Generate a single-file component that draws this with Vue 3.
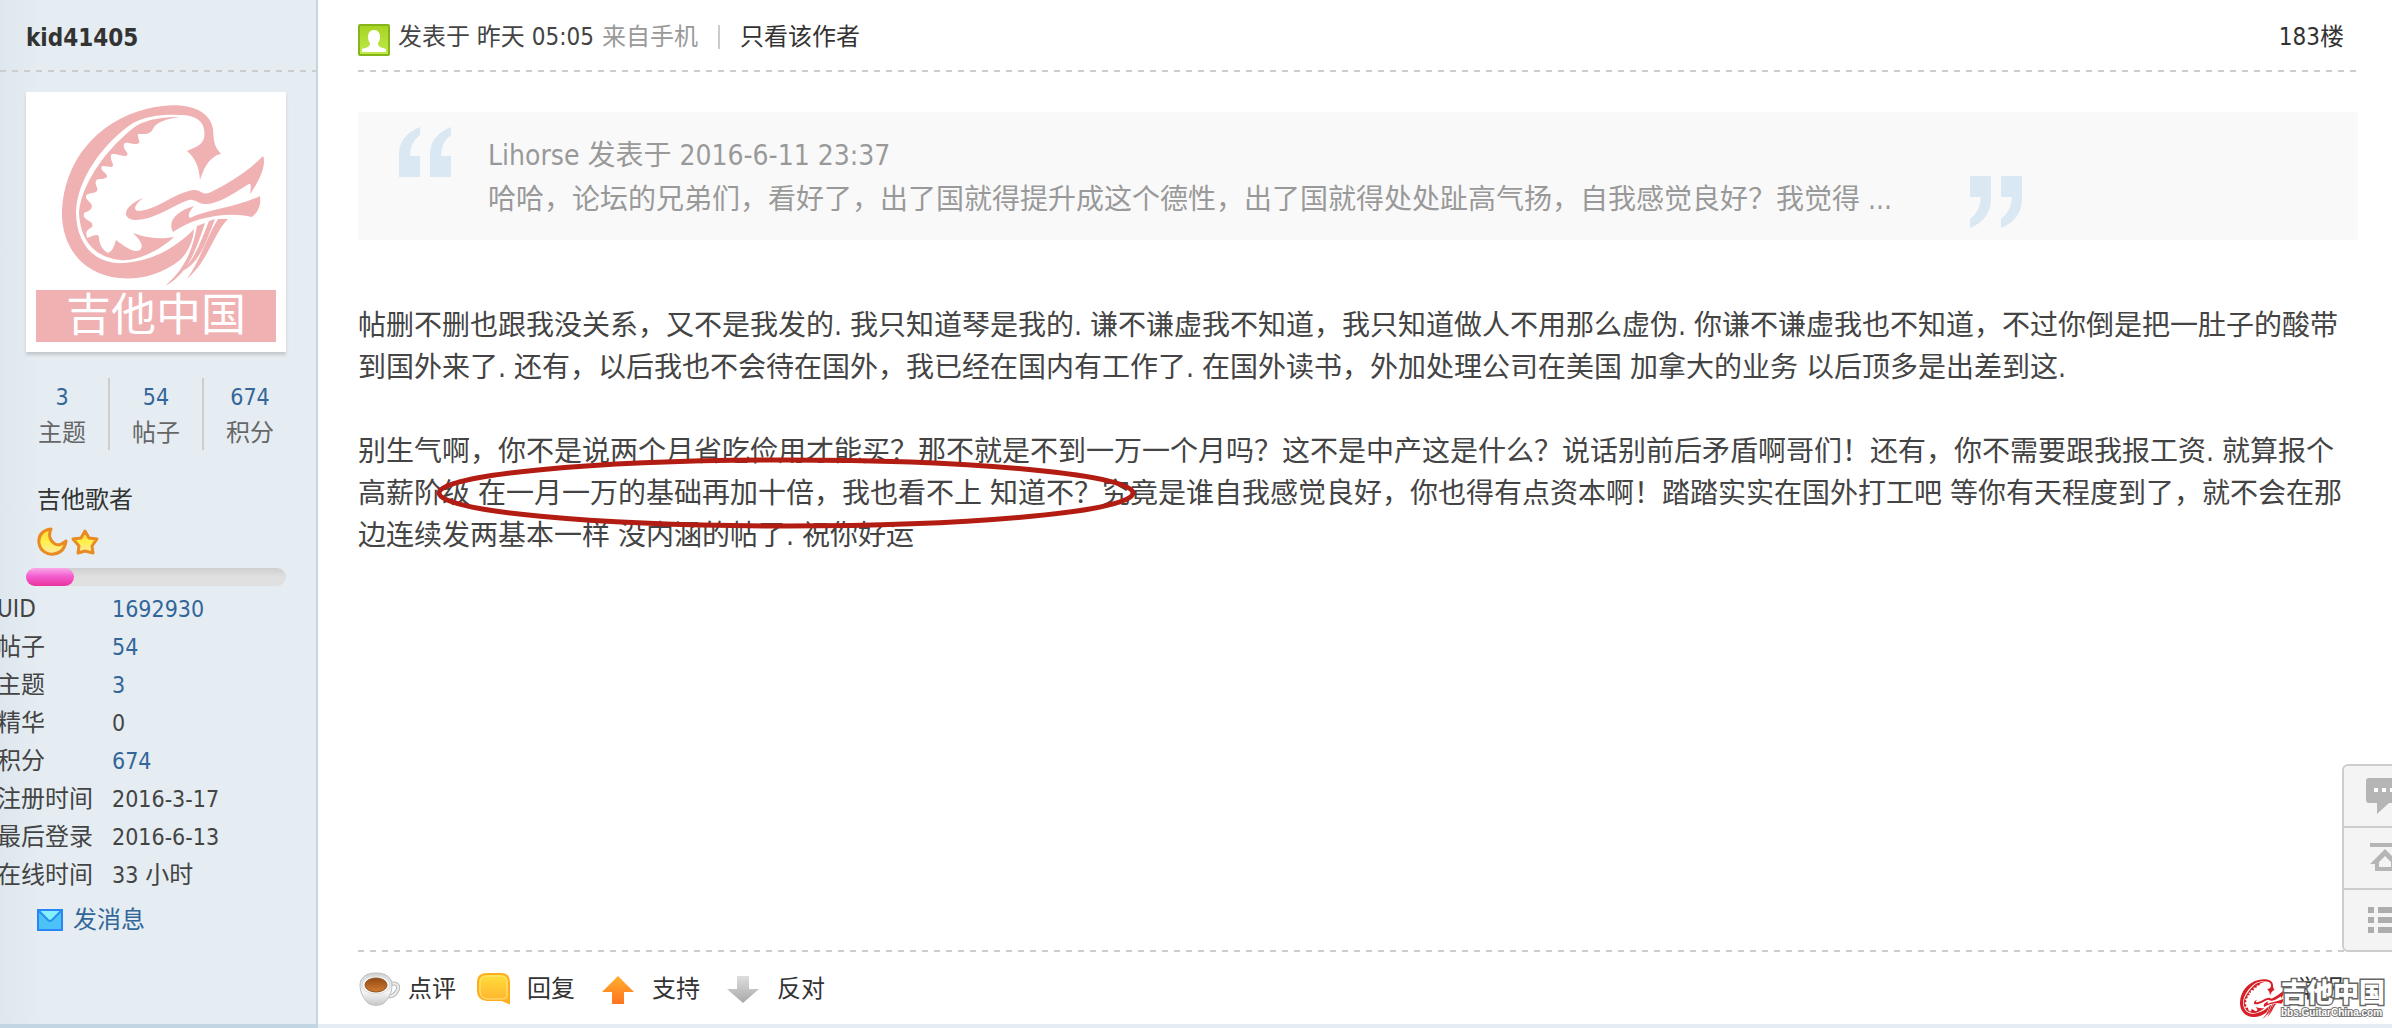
<template>
  <div class="post">
    <!-- 左侧用户信息 -->
    <aside class="author">
      <div class="author-name">
        <a href="#">kid41405</a>
      </div>
      <div class="dash"></div>
      <div class="avatar">
        <svg class="avatar-logo" viewBox="0 0 240 188">
          <use href="#guitar-logo" fill="#f0b1b3" stroke="#f0b1b3" />
        </svg>
        <div class="avatar-text">吉他中国</div>
      </div>
      <ul class="stats">
        <li v-for="item in stats" :key="item.name">
          <a href="#">{{ item.value }}</a>
          <span>{{ item.name }}</span>
        </li>
      </ul>
      <div class="rank">
        <a href="#" class="rank-name">吉他歌者</a>
        <div class="rank-icons">
          <svg width="32" height="32" viewBox="0 0 32 32">
            <path d="M14 3C6 4 1 9 2 17c1 8 8 12 15 11 7-1 11-6 12-13-4 3-7 5-11 3-5-3-7-9-4-15z" fill="url(#gold)" stroke="#e98a22" stroke-width="3" stroke-linejoin="round" />
          </svg>
          <svg width="30" height="32" viewBox="0 0 30 32">
            <path d="M16 5l4 7 8 1-5 7 1 7-8-2-7 2 1-7-6-7 8-1z" fill="url(#gold)" stroke="#e98a22" stroke-width="3" stroke-linejoin="round" />
          </svg>
        </div>
      </div>
      <div class="progress">
        <div class="progress-bar" :style="{ width: percent + '%' }"></div>
      </div>
      <dl class="info">
        <template v-for="row in info" :key="row.label">
          <dt>{{ row.label }}</dt>
          <dd>
            <a v-if="row.link" href="#">{{ row.value }}</a>
            <template v-else>{{ row.value }}</template>
            <span v-if="row.unit">&nbsp;{{ row.unit }}</span>
          </dd>
        </template>
      </dl>
      <a href="#" class="message">
        <svg width="26" height="22" viewBox="0 0 26 22">
          <rect x="1" y="1" width="24" height="20" fill="#4cc3f7" stroke="#2a86f8" stroke-width="2" />
          <path d="M3 2h20l-8 9q-2 2-4 0z" fill="#84f1ff" />
          <path d="M2 2l9 9q2 2 4 0l9-9" fill="none" stroke="#2a90ee" stroke-width="2" />
        </svg>
        发消息
      </a>
    </aside>

    <!-- 右侧帖子内容 -->
    <main class="content">
      <header class="post-header">
        <svg width="32" height="32" viewBox="0 0 32 32">
          <rect x="1" y="1" width="30" height="30" rx="1" fill="url(#green)" stroke="#84b51a" stroke-width="2" />
          <path d="M16 6c4 0 6 3 6 7 0 3-1 5-2 6 0 3 1 4 8 6v3H4v-3c7-2 8-3 8-6-1-1-2-3-2-6 0-4 2-7 6-7z" fill="#fff" />
        </svg>
        <span class="time">发表于 昨天 05:05</span>
        <span class="from">来自手机</span>
        <span class="pipe"></span>
        <a href="#">只看该作者</a>
        <a href="#" class="floor">183楼</a>
      </header>
      <div class="dash"></div>

      <blockquote class="quote">
        <svg class="quote-open" width="52" height="50" viewBox="0 0 52 50">
          <path d="M0 50V26Q1 8 21 0V8Q11 15 11 29H21V50zM31 50V26Q32 8 52 0V8Q42 15 42 29H52V50z" fill="#d9e8f3" />
        </svg>
        <div class="quote-text">
          <a href="#">Lihorse 发表于 2016-6-11 23:37</a>
          <p>哈哈，论坛的兄弟们，看好了，出了国就得提升成这个德性，出了国就得处处趾高气扬，自我感觉良好？我觉得 ...</p>
        </div>
        <svg class="quote-close" width="52" height="52" viewBox="0 0 52 52">
          <path d="M0 0H21V24Q20 44 0 52V43Q10 36 11 21H0zM31 0H52V24Q51 44 31 52V43Q41 36 42 21H31z" fill="#d9e8f3" />
        </svg>
      </blockquote>

      <div class="message-body">
        <p>帖删不删也跟我没关系，又不是我发的. 我只知道琴是我的. 谦不谦虚我不知道，我只知道做人不用那么虚伪. 你谦不谦虚我也不知道，不过你倒是把一肚子的酸带到国外来了. 还有，以后我也不会待在国外，我已经在国内有工作了. 在国外读书，外加处理公司在美国 加拿大的业务 以后顶多是出差到这.</p>
        <p>别生气啊，你不是说两个月省吃俭用才能买？那不就是不到一万一个月吗？这不是中产这是什么？说话别前后矛盾啊哥们！还有，你不需要跟我报工资. 就算报个高薪阶级 在一月一万的基础再加十倍，我也看不上 知道不？究竟是谁自我感觉良好，你也得有点资本啊！踏踏实实在国外打工吧 等你有天程度到了，就不会在那边连续发两基本一样 没内涵的帖了. 祝你好运</p>
        <svg class="mark" width="702" height="72" viewBox="0 0 702 72">
          <ellipse cx="350" cy="36" rx="347" ry="33" fill="none" stroke="#b31c12" stroke-width="5" />
        </svg>
      </div>

      <div class="dash"></div>
      <footer class="actions">
        <a href="#">
          <svg width="50" height="34" viewBox="0 0 50 34">
            <path d="M32 12c7-2 10 2 7 7-2 4-6 6-11 5" fill="none" stroke="#b9b9b9" stroke-width="4" />
            <path d="M32 12c7-2 10 2 7 7-2 4-6 6-11 5" fill="none" stroke="#ececec" stroke-width="2" />
            <path d="M2 13C2 5 9 1 18 1s16 4 16 12c0 9-4 14-8 18-4 3-12 3-16 0C6 27 2 21 2 13z" fill="url(#cup)" stroke="#bcbcbc" />
            <ellipse cx="18" cy="13" rx="14" ry="9" fill="#f5f5f5" stroke="#ddd" />
            <ellipse cx="18" cy="13" rx="11" ry="7" fill="url(#coffee)" stroke="#8c5222" />
          </svg>
          点评
        </a>
        <a href="#">
          <svg width="50" height="34" viewBox="0 0 50 34">
            <path d="M10 2h14q8 0 8 8v21l-7-3H10q-9-1-9-9v-9q0-8 9-8z" fill="url(#bubble)" stroke="#ffae1b" stroke-width="2" />
            <path d="M10 4h14q6 0 6 6v13q0 4-6 4H10q-7-1-7-7v-9q0-7 7-7z" fill="none" stroke="#ffe680" />
          </svg>
          回复
        </a>
        <a href="#">
          <svg width="56" height="34" viewBox="0 0 56 34">
            <path d="M22 4l16 16H28v12H16V20H6z" fill="url(#up)" />
          </svg>
          支持
        </a>
        <a href="#">
          <svg width="56" height="34" viewBox="0 0 56 34">
            <path d="M22 31l16-14H28V4H16v13H6z" fill="url(#down)" />
          </svg>
          反对
        </a>
        <a href="#" class="report">举报</a>
      </footer>
    </main>

    <!-- 右侧悬浮按钮 -->
    <nav class="side-tools">
      <button aria-label="回复">
        <svg width="50" height="40" viewBox="0 0 50 40">
          <path d="M3 2h40q3 0 3 3v19q0 3-3 3H23L11 38V27H3q-3 0-3-3V5q0-3 3-3z" fill="#b5b5b5" />
          <path d="M8 12h4v4H8zM16 12h4v4h-4zM24 12h4v4h-4z" fill="#fff" />
        </svg>
      </button>
      <button aria-label="顶部">
        <svg width="50" height="40" viewBox="0 0 50 40">
          <path d="M4 5h30v4H4zM19 11L4 26h5v7h20v-7h5zM19 18l6 6v5H13v-5z" fill="#b5b5b5" fill-rule="evenodd" />
        </svg>
      </button>
      <button aria-label="列表">
        <svg width="50" height="40" viewBox="0 0 50 40">
          <path d="M2 7h6v6H2zM12 7h24v6H12zM2 17h6v6H2zM12 17h24v6H12zM2 27h6v6H2zM12 27h24v6H12z" fill="#adadad" />
        </svg>
      </button>
    </nav>

    <!-- 水印 -->
    <div class="watermark">
      <svg width="44" height="41" viewBox="26 4 202 184">
        <use href="#guitar-logo" fill="#d61f26" stroke="#d61f26" />
      </svg>
      <div class="watermark-text">
        <strong>吉他中国</strong>
        <span>bbs.GuitarChina.com</span>
      </div>
    </div>

    <svg class="defs" width="0" height="0">
      <defs>
        <g id="guitar-logo">
          <!-- 外圈琴身 -->
          <path stroke="none" d="M168 36C171 20 160 13 144 13C128 12 110 14 97 21C66 42 41 78 40 110C40 145 62 163 88 161C124 158 145 140 158 127C157 141 151 151 144 158C124 174 101 178 83 176C45 172 25 143 26 109C28 60 60 20 110 7C150-3 174 8 177 27C178 38 177 43 185 52L181 53C175 57 170 60 164 78C163 64 159 56 151 49C160 45 166 43 168 36z" />
          <path stroke="none" d="M144 15C130 17 120 20 117 27C114 33 108 32 102 32C101 37 107 41 100 42C96 42 90 39 88 42C86 48 95 51 90 54C84 54 77 50 75 53C74 60 79 62 76 65L66 64C63 69 72 71 71 75C66 79 62 75 60 79C58 84 64 86 60 90C54 92 50 91 50 95C50 99 60 102 54 108C50 111 47 109 48 115C52 120 58 119 56 125C52 128 49 128 51 136C57 134 62 131 63 135C63 143 67 148 72 151C77 149 78 144 80 138C88 144 98 152 104 148C109 143 102 136 97 131C108 135 121 138 138 135C123 149 100 160 84 158C58 155 44 138 43 110C46 80 72 45 100 24C112 17 126 15 144 15z" />
          <!-- 琴颈 -->
          <path stroke="none" d="M107 96C99 102 96 109 103 109C123 107 134 93 157 88C164 87 166 93 173 91C192 82 213 69 227 54C231 62 223 80 214 92C215 84 216 80 211 83C198 91 190 97 177 101C163 105 160 96 153 98C133 105 121 117 99 118C85 117 87 104 107 96z" />
          <path stroke="none" d="M158 104C154 109 151 113 154 116C172 107 199 106 224 94C225 103 223 109 216 115C189 109 157 116 137 130C131 119 141 109 158 104z" />
          <path stroke="none" d="M161 124L169 121C160 148 152 172 129 184C150 166 157 146 161 124zM173 119L179 117C170 140 163 162 146 169C160 156 166 136 173 119zM182 117L192 117C177 132 173 158 151 177C165 157 170 136 182 117z" />
        </g>
        <linearGradient id="gold" x1="0" y1="0" x2="0" y2="1">
          <stop offset="0" stop-color="#ffd83c" />
          <stop offset="0.5" stop-color="#fff04a" />
          <stop offset="1" stop-color="#ffe9a8" />
        </linearGradient>
        <linearGradient id="green" x1="0" y1="0" x2="0" y2="1">
          <stop offset="0" stop-color="#a6d322" />
          <stop offset="1" stop-color="#c1ea4c" />
        </linearGradient>
        <linearGradient id="cup" x1="0" y1="0" x2="0" y2="1">
          <stop offset="0" stop-color="#d2d2d2" />
          <stop offset="0.6" stop-color="#f5f5f5" />
          <stop offset="1" stop-color="#c8c8c8" />
        </linearGradient>
        <linearGradient id="coffee" x1="0" y1="0" x2="0" y2="1">
          <stop offset="0" stop-color="#944a14" />
          <stop offset="1" stop-color="#d27c30" />
        </linearGradient>
        <linearGradient id="bubble" x1="0" y1="0" x2="0" y2="1">
          <stop offset="0" stop-color="#ffdf3a" />
          <stop offset="1" stop-color="#ffb02e" />
        </linearGradient>
        <linearGradient id="up" x1="0" y1="0" x2="0" y2="1">
          <stop offset="0" stop-color="#ffb02e" />
          <stop offset="1" stop-color="#ff7320" />
        </linearGradient>
        <linearGradient id="down" x1="0" y1="0" x2="0" y2="1">
          <stop offset="0" stop-color="#dedede" />
          <stop offset="1" stop-color="#a8a8a8" />
        </linearGradient>
      </defs>
    </svg>
  </div>
</template>

<script setup>
import { ref } from "vue";

const percent = ref(18.5);

// 头像下方统计
const stats = ref([
  { name: "主题", value: 3 },
  { name: "帖子", value: 54 },
  { name: "积分", value: 674 },
]);

// 用户详细资料
const info = ref([
  { label: "UID", value: "1692930", link: true },
  { label: "帖子", value: "54", link: true },
  { label: "主题", value: "3", link: true },
  { label: "精华", value: "0" },
  { label: "积分", value: "674", link: true },
  { label: "注册时间", value: "2016-3-17" },
  { label: "最后登录", value: "2016-6-13" },
  { label: "在线时间", value: "33", unit: "小时" },
]);
</script>

<style>
body {
  margin: 0;
  background: #fff;
}
</style>

<style scoped>
.post {
  position: relative;
  display: flex;
  min-height: 100vh;
  overflow: hidden;
  box-sizing: border-box;
  font-family: "DejaVu Sans Condensed", "Noto Sans CJK SC", sans-serif;
  font-size: 24px;
  line-height: 36px;
  color: #444;
}

a {
  color: #333;
  text-decoration: none;
}

p {
  margin: 0;
}

svg {
  flex-shrink: 0;
}

.defs {
  position: absolute;
}

.dash {
  height: 2px;
  background: repeating-linear-gradient(90deg, #cdcdcd 0 6px, transparent 6px 12px);
}

/* 左栏 */
.author {
  width: 316px;
  flex-shrink: 0;
  border-right: 2px solid #c2d5e3;
  border-bottom: 4px solid #c2d5e3;
  background: linear-gradient(90deg, #dfe7ee, #e5edf3 40px);
}

.author-name {
  height: 70px;
  padding-left: 26px;
  line-height: 76px;
  font-weight: bold;
}

.avatar {
  width: 240px;
  margin: 20px 0 0 26px;
  padding: 10px;
  background: #fff;
  box-shadow: 0 3px 3px #c4c8cc;
}

.avatar-logo {
  display: block;
  width: 240px;
  height: 188px;
}

.avatar-text {
  height: 52px;
  line-height: 52px;
  background: #f0b1b3;
  color: #fff;
  font-size: 45px;
  text-align: center;
}

.stats {
  display: flex;
  width: 280px;
  margin: 26px 0 0 16px;
  padding: 0;
  list-style: none;
}

.stats li {
  flex: 1;
  display: flex;
  flex-direction: column;
  align-items: center;
  border-left: 2px solid #cdcdcd;
  color: #666;
}

.stats li:first-child {
  border-left: none;
}

.stats a,
.info a,
.message {
  color: #369;
}

.stats a,
.info dd {
  font-size: 23px;
}

.stats a {
  line-height: 38px;
}

.stats span {
  line-height: 34px;
}

.rank {
  margin: 32px 0 0 37px;
}

.rank-name {
  display: block;
}

.rank-icons {
  display: flex;
  height: 34px;
  padding-top: 8px;
}

.progress {
  width: 260px;
  height: 18px;
  margin: 8px 0 0 26px;
  border-radius: 9px;
  background: linear-gradient(#cfcfcf, #e0e0e0 50%);
}

.progress-bar {
  height: 18px;
  border-radius: 9px;
  background: linear-gradient(#f9a8e8, #f35fd0 45%, #e9329e);
}

.info {
  display: grid;
  grid-template-columns: 115px 1fr;
  grid-auto-rows: 38px;
  line-height: 38px;
  margin: 4px 0 0 -3px;
}

.info dd {
  margin: 0;
}

.info span {
  font-size: 24px;
}

.message {
  display: flex;
  align-items: center;
  gap: 10px;
  margin: 8px 0 0 37px;
}

/* 右栏 */
.content {
  flex: 1;
  display: flex;
  flex-direction: column;
  min-width: 0;
  padding: 0 34px 0 40px;
  border-bottom: 4px solid #e5edf2;
}

.post-header {
  display: flex;
  align-items: center;
  height: 70px;
  padding-top: 4px;
  box-sizing: border-box;
}

.post-header svg {
  margin: 6px 8px 0 0;
}

.from {
  margin-left: 8px;
  color: #999;
}

.pipe {
  width: 2px;
  height: 24px;
  margin: 0 20px;
  background: #ccc;
}

.floor {
  margin-left: auto;
  padding-right: 14px;
}

.quote {
  display: flex;
  margin: 40px 0 0;
  padding: 22px 0 18px;
  background: #f9f9f9;
  color: #999;
  font-size: 28px;
  line-height: 44px;
}

.quote-open {
  margin: -7px 37px 0 41px;
}

.quote-text a {
  color: #999;
}

.quote-close {
  align-self: flex-end;
  margin: 0 0 -6px 78px;
}

.message-body {
  position: relative;
  flex: 1;
  padding-top: 65px;
  font-size: 28px;
  line-height: 42px;
}

.message-body p {
  margin-bottom: 42px;
}

/* 红圈标注 */
.mark {
  position: absolute;
  left: 78px;
  top: 217px;
}

.actions {
  display: flex;
  align-items: center;
  gap: 21px;
  height: 72px;
  padding-top: 2px;
  box-sizing: border-box;
}

.actions a {
  display: flex;
  align-items: center;
}

.actions .report {
  margin-left: auto;
  padding-right: 14px;
}

.side-tools {
  position: absolute;
  right: -50px;
  bottom: 76px;
  width: 100px;
  box-sizing: border-box;
  border: 2px solid #cdcdcd;
  border-radius: 6px;
  background: #f4f4f4;
}

.side-tools button {
  display: flex;
  align-items: center;
  width: 100%;
  height: 60px;
  padding: 0 0 0 22px;
  border: none;
  background: none;
}

.side-tools button + button {
  height: 62px;
  border-top: 2px solid #cdcdcd;
}

.watermark {
  position: absolute;
  right: 7px;
  bottom: 8px;
  display: flex;
}

.watermark-text {
  display: flex;
  flex-direction: column;
  margin-left: -3px;
  color: #fff;
  paint-order: stroke fill;
  -webkit-text-stroke: 3px #666;
}

.watermark strong {
  font-size: 26px;
  font-weight: 900;
  line-height: 28px;
}

.watermark span {
  font-family: "Liberation Sans Narrow", "Liberation Sans", sans-serif;
  font-size: 10px;
  font-weight: bold;
  line-height: 12px;
  -webkit-text-stroke: 2px #777;
}
</style>
